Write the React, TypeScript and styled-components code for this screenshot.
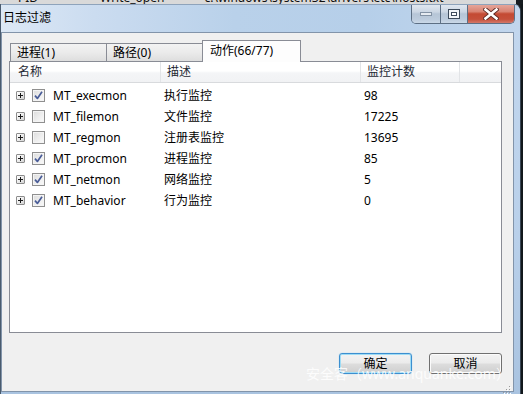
import React from "react";
import styled, { createGlobalStyle, css } from "styled-components";

const UI = `"Noto Sans", "Noto Sans CJK SC", sans-serif`;

const Global = createGlobalStyle`
  html, body { margin: 0; padding: 0; }
  body {
    width: 523px;
    height: 394px;
    overflow: hidden;
    background: #161c21;
    font-family: ${UI};
    font-size: 12px;
    color: #000;
  }
`;

const Screen = styled.div`
  position: relative;
  width: 523px;
  height: 394px;
  overflow: hidden;
  display: flex;
  flex-direction: column;
  background: #161c21;
`;

const Backdrop = styled.div`
  flex: none;
  height: 4px;
  overflow: hidden;
  display: flex;
  align-items: flex-end;
  background: #d9d9d9;
  width: 516px;
`;

const BackdropText = styled.span<{ $gap: number }>`
  flex: none;
  margin-left: ${(p) => p.$gap}px;
  font: 12px/12px ${UI};
  color: #111;
  white-space: nowrap;
`;

const Stage = styled.div`
  flex: 1;
  display: flex;
  min-height: 0;
`;

const Window = styled.div`
  width: 521px;
  box-sizing: border-box;
  flex: none;
  display: flex;
  flex-direction: column;
  border-left: 1px solid #4a5b6e;
  border-right: 1px solid #3a4756;
  border-top: 1px solid #8ea3bb;
  border-top-right-radius: 7px;
  background: linear-gradient(180deg, #c3d7ee 0%, #b9d0ea 60%, #a9c3e0 100%);
  overflow: hidden;
`;

const TitleBar = styled.div`
  flex: none;
  height: 27px;
  display: flex;
  justify-content: space-between;
  align-items: flex-start;
  background: linear-gradient(
    90deg,
    #dce8f5 0%,
    #cbdcf0 18%,
    #b9d1ea 45%,
    #b6cfe9 70%,
    #c2d6ed 100%
  );
`;

const Title = styled.div`
  margin: 6px 0 0 2px;
  font: 12px/14px ${UI};
  color: #000;
  letter-spacing: 0;
`;

const CaptionGroup = styled.div`
  display: flex;
  margin: -1px 5px 0 0;
  height: 19px;
  border: 1px solid #5d6f84;
  border-top: none;
  border-radius: 0 0 5px 5px;
  overflow: hidden;
`;

const CaptionButton = styled.div<{ $w: number; $close?: boolean }>`
  width: ${(p) => p.$w}px;
  height: 19px;
  display: flex;
  align-items: center;
  justify-content: center;
  box-sizing: border-box;
  & + & {
    border-left: 1px solid #5d6f84;
  }
  ${(p) =>
    p.$close
      ? css`
          background: linear-gradient(
            180deg,
            #e7aa9f 0%,
            #d98473 40%,
            #c44a33 52%,
            #c5503a 80%,
            #d4786a 100%
          );
        `
      : css`
          background: linear-gradient(
            180deg,
            #e3eaf2 0%,
            #cbd6e3 42%,
            #b6c5d6 52%,
            #bccbdc 80%,
            #cbd9e8 100%
          );
        `}
`;

const FrameBody = styled.div`
  flex: none;
  display: flex;
`;

const Client = styled.div`
  position: relative;
  width: 513px;
  height: 360px;
  box-sizing: border-box;
  border: 1px solid #8294aa;
  background: #f0f0f0;
  padding: 7px 0 0 7px;
  display: flex;
  flex-direction: column;
`;

const TabControl = styled.div`
  width: 493px;
  display: flex;
  flex-direction: column;
`;

const TabStrip = styled.div`
  height: 21px;
  display: flex;
  align-items: flex-end;
  padding-left: 1px;
`;

const Tab = styled.div<{ $active?: boolean; $w: number }>`
  position: relative;
  box-sizing: border-box;
  width: ${(p) => p.$w}px;
  border: 1px solid #898c95;
  border-bottom: none;
  font: 12px/1 ${UI};
  display: flex;
  align-items: center;
  white-space: nowrap;
  & + & {
    margin-left: -1px;
  }
  ${(p) =>
    p.$active
      ? css`
          height: 22px;
          margin-bottom: -1px;
          z-index: 1;
          background: #fdfdfd;
          padding: 0 0 1px 7px;
        `
      : css`
          height: 18px;
          background: linear-gradient(180deg, #f3f3f3 0%, #ebebeb 50%, #dedede 100%);
          padding: 0 0 0 6px;
        `}
`;

const Panel = styled.div`
  height: 272px;
  box-sizing: border-box;
  border: 1px solid #898c95;
  background: #fff;
  display: flex;
  flex-direction: column;
`;

const ListHeader = styled.div`
  flex: none;
  height: 21px;
  box-sizing: border-box;
  display: flex;
  border-bottom: 1px solid #d8dadd;
  background: linear-gradient(180deg, #ffffff 0%, #ffffff 45%, #f4f5f7 55%, #f1f2f4 100%);
`;

const HeaderCell = styled.div<{ $w?: number; $pad: number }>`
  ${(p) => (p.$w ? `width: ${p.$w}px; flex: none;` : "flex: 1;")}
  box-sizing: border-box;
  padding-left: ${(p) => p.$pad}px;
  border-right: ${(p) => (p.$w ? "1px solid #e2e4e7" : "none")};
  font: 12px/20px ${UI};
  color: #1e2833;
  white-space: nowrap;
`;

const ListBody = styled.div`
  padding-top: 2px;
  display: flex;
  flex-direction: column;
`;

const Row = styled.div`
  height: 21px;
  display: flex;
  align-items: center;
`;

const Cell = styled.div<{ $w: number; $pad: number }>`
  width: ${(p) => p.$w}px;
  flex: none;
  box-sizing: border-box;
  padding-left: ${(p) => p.$pad}px;
  display: flex;
  align-items: center;
  font: 12px/21px ${UI};
  color: #000;
  white-space: nowrap;
`;

const Expander = styled.span`
  width: 9px;
  height: 9px;
  box-sizing: border-box;
  flex: none;
  margin-right: 7px;
  border: 1px solid #8c8c8c;
  border-radius: 1px;
  background: linear-gradient(135deg, #ffffff 0%, #e8e8e8 60%, #d2d2d2 100%);
  display: flex;
  align-items: center;
  justify-content: center;
`;

const CheckBox = styled.span`
  width: 13px;
  height: 13px;
  box-sizing: border-box;
  flex: none;
  margin-right: 8px;
  border: 1px solid #8f8f8f;
  background: linear-gradient(135deg, #dcdcdc 0%, #eeeeee 55%, #fafafa 100%);
  box-shadow: inset 0 0 0 1px #f4f4f4;
  display: flex;
  align-items: center;
  justify-content: center;
`;

const ButtonRow = styled.div`
  width: 493px;
  margin-top: 20px;
  display: flex;
  justify-content: flex-end;
  gap: 17px;
`;

const Button = styled.div<{ $default?: boolean }>`
  width: 73px;
  height: 21px;
  box-sizing: border-box;
  border-radius: 3px;
  display: flex;
  align-items: center;
  justify-content: center;
  font: 12px/1 ${UI};
  color: #000;
  background: linear-gradient(180deg, #f3f3f3 0%, #ebebeb 48%, #dddddd 52%, #cfcfcf 100%);
  border: 1px solid ${(p) => (p.$default ? "#3c8fd0" : "#707070")};
  box-shadow: ${(p) =>
    p.$default
      ? "inset 0 0 0 1px #9fdcf5, 0 0 1px #6cc4ee"
      : "inset 0 0 0 1px #fbfbfb"};
`;

const SizeGrip = styled.div`
  position: absolute;
  right: 2px;
  bottom: 2px;
  width: 8px;
  height: 8px;
`;

const RightFrame = styled.div`
  flex: 1;
`;

const EdgeStrip = styled.div`
  flex: 1;
  background: #11171b;
`;

const Watermark = styled.div`
  position: absolute;
  left: 306px;
  top: 365px;
  font: 14px/18px ${UI};
  color: rgba(255, 255, 255, 0.85);
  white-space: nowrap;
  pointer-events: none;
`;

type Item = { name: string; desc: string; count: string; checked: boolean };

const items: Item[] = [
  { name: "MT_execmon", desc: "执行监控", count: "98", checked: true },
  { name: "MT_filemon", desc: "文件监控", count: "17225", checked: false },
  { name: "MT_regmon", desc: "注册表监控", count: "13695", checked: false },
  { name: "MT_procmon", desc: "进程监控", count: "85", checked: true },
  { name: "MT_netmon", desc: "网络监控", count: "5", checked: true },
  { name: "MT_behavior", desc: "行为监控", count: "0", checked: true },
];

const PlusIcon = () => (
  <svg width="7" height="7" viewBox="0 0 7 7">
    <path d="M1 3.5H6M3.5 1V6" stroke="#1a1a1a" strokeWidth="1" shapeRendering="crispEdges" />
  </svg>
);

const CheckIcon = () => (
  <svg width="11" height="11" viewBox="0 0 11 11">
    <path d="M2 5.6 L4.4 8.4 L9 1.8" fill="none" stroke="#4a5d98" strokeWidth="1.7" strokeLinejoin="round" />
  </svg>
);

const MinIcon = () => (
  <svg width="14" height="6" viewBox="0 0 14 6">
    <rect x="1.5" y="1.5" width="11" height="3" fill="#e6ebf1" stroke="#8392a4" />
  </svg>
);

const MaxIcon = () => (
  <svg width="12" height="10" viewBox="0 0 12 10">
    <rect x="0.5" y="0.5" width="11" height="9" fill="#f2f5f8" stroke="#3d4b5b" />
    <rect x="3.5" y="3.5" width="5" height="3" fill="#ffffff" stroke="#3d4b5b" />
  </svg>
);

const CloseIcon = () => (
  <svg width="16" height="12" viewBox="0 0 16 12">
    <path d="M2.5 1.5 L13.5 10.5 M13.5 1.5 L2.5 10.5" stroke="#5b2a24" strokeWidth="4.4" strokeLinecap="square" />
    <path d="M2.5 1.5 L13.5 10.5 M13.5 1.5 L2.5 10.5" stroke="#ffffff" strokeWidth="2.6" strokeLinecap="square" />
  </svg>
);

const GripIcon = () => (
  <svg width="8" height="8" viewBox="0 0 8 8">
    {[
      [6, 0],
      [3, 3],
      [6, 3],
      [0, 6],
      [3, 6],
      [6, 6],
    ].map(([x, y], i) => (
      <g key={i}>
        <rect x={x + 1} y={y + 1} width="1" height="1" fill="#ffffff" />
        <rect x={x} y={y} width="1" height="1" fill="#9a9a9a" />
      </g>
    ))}
  </svg>
);

const COLS = [151, 200, 99];

export default function App() {
  return (
    <Screen>
      <Global />
      <Backdrop>
        <BackdropText $gap={18}>PID</BackdropText>
        <BackdropText $gap={62}>Write_open</BackdropText>
        <BackdropText $gap={40}>c:\windows\system32\drivers\etc\hosts.txt</BackdropText>
      </Backdrop>
      <Stage>
        <Window>
          <TitleBar>
            <Title>日志过滤</Title>
            <CaptionGroup>
              <CaptionButton $w={28}>
                <MinIcon />
              </CaptionButton>
              <CaptionButton $w={27}>
                <MaxIcon />
              </CaptionButton>
              <CaptionButton $w={47} $close>
                <CloseIcon />
              </CaptionButton>
            </CaptionGroup>
          </TitleBar>
          <FrameBody>
            <Client>
              <TabControl>
                <TabStrip>
                  <Tab $w={97}>进程(1)</Tab>
                  <Tab $w={97}>路径(0)</Tab>
                  <Tab $w={99} $active>
                    动作(66/77)
                  </Tab>
                </TabStrip>
                <Panel>
                  <ListHeader>
                    <HeaderCell $w={COLS[0]} $pad={8}>名称</HeaderCell>
                    <HeaderCell $w={COLS[1]} $pad={6}>描述</HeaderCell>
                    <HeaderCell $w={COLS[2]} $pad={6}>监控计数</HeaderCell>
                    <HeaderCell $pad={0} />
                  </ListHeader>
                  <ListBody>
                    {items.map((it) => (
                      <Row key={it.name}>
                        <Cell $w={COLS[0]} $pad={6}>
                          <Expander>
                            <PlusIcon />
                          </Expander>
                          <CheckBox>{it.checked && <CheckIcon />}</CheckBox>
                          {it.name}
                        </Cell>
                        <Cell $w={COLS[1]} $pad={3}>
                          {it.desc}
                        </Cell>
                        <Cell $w={COLS[2]} $pad={3}>
                          {it.count}
                        </Cell>
                      </Row>
                    ))}
                  </ListBody>
                </Panel>
              </TabControl>
              <ButtonRow>
                <Button $default>确定</Button>
                <Button>取消</Button>
              </ButtonRow>
              <SizeGrip>
                <GripIcon />
              </SizeGrip>
            </Client>
            <RightFrame />
          </FrameBody>
        </Window>
        <EdgeStrip />
      </Stage>
      <Watermark>安全客（www.anquanke.com）</Watermark>
    </Screen>
  );
}
